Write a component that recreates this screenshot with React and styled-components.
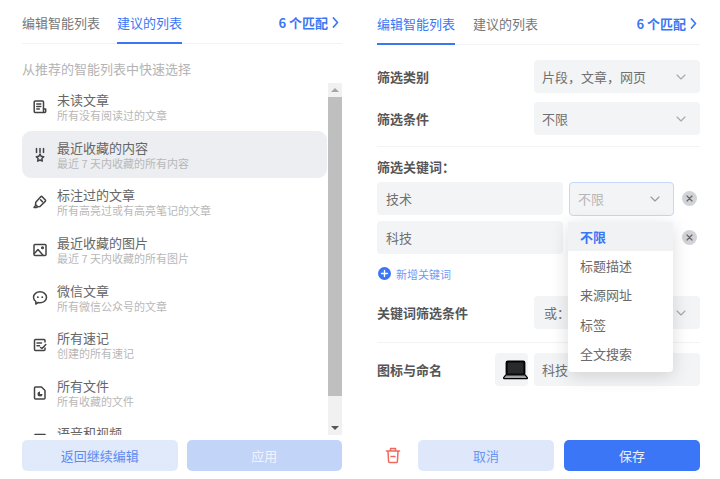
import React from 'react';
import styled, { createGlobalStyle } from 'styled-components';

const GlobalStyle = createGlobalStyle`
  html, body {
    margin: 0;
    padding: 0;
    background: #fff;
  }
  body {
    font-family: "Noto Sans CJK SC", "Noto Sans", sans-serif;
    font-size: 13px;
    color: #555;
  }
`;

const BLUE = '#3b76f6';

// Layout
const Page = styled.div`
  width: 720px;
  height: 479px;
  display: flex;
  overflow: hidden;
`;
const Panel = styled.div`
  width: ${(props) => props.$width}px;
  margin-left: ${(props) => props.$offset}px;
  height: 479px;
  box-sizing: border-box;
  padding-top: ${(props) => props.$top || 0}px;
  position: relative;
`;

// Tabs
const TabBar = styled.div`
  height: 44px;
  box-sizing: border-box;
  display: flex;
  align-items: stretch;
  gap: ${(props) => props.$gap}px;
  border-bottom: 1px solid #f2f3f5;
`;
const Tab = styled.div`
  height: 44px;
  box-sizing: border-box;
  line-height: 45px;
  font-size: 13px;
  color: ${(props) => (props.$active ? BLUE : '#777')};
  border-bottom: 2px solid ${(props) => (props.$active ? BLUE : 'transparent')};
  white-space: nowrap;
`;
const Match = styled.div`
  margin-left: auto;
  margin-right: 3px;
  display: flex;
  align-items: center;
  gap: 4px;
  height: 44px;
  font-size: 13px;
  font-weight: 700;
  color: ${BLUE};
`;

// Left panel
const Hint = styled.div`
  height: 39px;
  line-height: 50px;
  font-size: 13px;
  color: #b4b4b4;
`;
const ListWrap = styled.div`
  display: flex;
  height: 352px;
  overflow: hidden;
  gap: 1px;
`;
const List = styled.div`
  flex: 1;
  overflow: hidden;
`;
const Row = styled.div`
  height: 47.6px;
  box-sizing: border-box;
  display: flex;
  align-items: center;
  border-radius: 9px;
  background: ${(props) => (props.$active ? '#eceef2' : 'transparent')};
`;
const RowIcon = styled.div`
  width: 35px;
  flex: none;
  display: flex;
  justify-content: center;
  margin-top: 1px;
  color: #444;
`;
const RowText = styled.div`
  display: flex;
  flex-direction: column;
  min-height: 31px;
  margin-top: 2px;
`;
const RowTitle = styled.div`
  font-size: 13px;
  line-height: 16px;
  color: #666;
`;
const RowSub = styled.div`
  font-size: 11px;
  line-height: 15px;
  color: #b8b8b8;
`;
const Scrollbar = styled.div`
  width: 14px;
  flex: none;
  background: #f1f1f1;
  display: flex;
  flex-direction: column;
  align-items: center;
`;
const Arrow = styled.div`
  height: 14px;
  flex: none;
  display: flex;
  align-items: center;
  justify-content: center;
  margin-top: ${(props) => (props.$down ? 'auto' : 0)};
  &::after {
    content: '';
    border-left: 4px solid transparent;
    border-right: 4px solid transparent;
    ${(props) =>
      props.$down
        ? 'border-top: 4px solid #555;'
        : 'border-bottom: 4px solid #a6a6a6;'}
  }
`;
const Thumb = styled.div`
  width: 14px;
  height: 299px;
  background: #bfbfbf;
`;

// Footer buttons
const Footer = styled.div`
  position: absolute;
  left: 0;
  right: 0;
  top: 440px;
  display: flex;
  align-items: center;
  gap: ${(props) => props.$gap}px;
`;
const Button = styled.div`
  flex: ${(props) => (props.$fixed ? 'none' : 1)};
  width: ${(props) => (props.$fixed ? `${props.$fixed}px` : 'auto')};
  height: 31px;
  line-height: 31px;
  border-radius: 5px;
  text-align: center;
  font-size: 13px;
  background: ${(props) => props.$bg};
  color: ${(props) => props.$color};
`;
const Trash = styled.div`
  width: 31px;
  flex: none;
  display: flex;
  justify-content: flex-start;
  padding-left: 8px;
  box-sizing: border-box;
`;

// Right panel form
const FormRow = styled.div`
  display: flex;
  align-items: center;
  height: 33px;
  margin-top: ${(props) => props.$mt || 0}px;
`;
const Label = styled.div`
  font-size: 13px;
  font-weight: 700;
  color: #555;
  white-space: nowrap;
`;
const Field = styled.div`
  height: 33px;
  box-sizing: border-box;
  background: #f3f4f6;
  border-radius: 4px;
  display: flex;
  align-items: center;
  justify-content: space-between;
  padding: 0 13px 0 ${(props) => props.$pad || 8}px;
  font-size: 13px;
  color: #707070;
  flex: none;
  width: ${(props) => props.$width}px;
  margin-left: ${(props) => (props.$auto ? 'auto' : '0')};
`;
const Divider = styled.div`
  height: 1px;
  background: #f2f3f5;
  margin-top: ${(props) => props.$mt}px;
`;
const SectionTitle = styled.div`
  margin-top: 10px;
  height: 19px;
  line-height: 19px;
  font-size: 13px;
  font-weight: 700;
  color: #555;
`;
const KeywordRow = styled.div`
  display: flex;
  align-items: center;
  height: 33px;
  margin-top: ${(props) => props.$mt}px;
  position: relative;
`;
const FocusSelect = styled(Field)`
  width: 105px;
  height: 34px;
  margin-left: 6px;
  padding: 0 12px 0 8px;
  border: 1.5px solid #c6d6f7;
  color: #b5b5b5;
`;
const Remove = styled.div`
  width: 15px;
  height: 15px;
  border-radius: 50%;
  background: #d2d3d7;
  margin-left: ${(props) => props.$ml}px;
  display: flex;
  align-items: center;
  justify-content: center;
  flex: none;
`;
const Menu = styled.div`
  position: absolute;
  left: 191px;
  top: 1px;
  width: 105px;
  height: 150px;
  background: #fff;
  border-radius: 4px;
  box-shadow: 0 4px 18px rgba(0, 0, 0, 0.14);
  z-index: 2;
`;
const MenuItem = styled.div`
  height: 29.2px;
  line-height: 29.2px;
  padding-left: 12px;
  font-size: 13px;
  font-weight: ${(props) => (props.$active ? 700 : 400)};
  color: ${(props) => (props.$active ? BLUE : '#6a6a6a')};
  background: ${(props) => (props.$active ? '#f1f2f4' : 'transparent')};
`;
const AddKeyword = styled.div`
  display: flex;
  align-items: center;
  gap: 5px;
  height: 19px;
  margin-top: 10px;
  margin-left: 1px;
  font-size: 11px;
  color: #6f9bf7;
`;
const IconBox = styled.div`
  width: 33px;
  height: 33px;
  box-sizing: border-box;
  margin-left: auto;
  margin-right: 6px;
  padding-left: 8px;
  background: #f3f4f6;
  border-radius: 4px;
  display: flex;
  align-items: center;
  overflow: visible;
`;
const LaptopSvg = styled.svg`
  flex: none;
`;

// Icons
const Svg = ({ children, size = 16, ...rest }) => (
  <svg
    width={size}
    height={size}
    viewBox="0 0 16 16"
    fill="none"
    stroke="currentColor"
    strokeWidth="1.5"
    strokeLinecap="round"
    strokeLinejoin="round"
    {...rest}
  >
    {children}
  </svg>
);

const ArticleIcon = () => (
  <Svg>
    <path d="M12 13.500H3.200a1 1 0 0 1-1-1V3a1 1 0 0 1 1-1h7.300a1 1 0 0 1 1 1v9.500a1 1 0 0 0 1 1h.2a1 1 0 0 0 1-1V10h-2.500" />
    <path d="M4.800 5h4M4.800 7.500h4M4.800 10h2.500" />
  </Svg>
);
const MedalIcon = () => (
  <Svg>
    <path d="M4.500 1.500v4M8 1.500v4M11.500 1.500v4" />
    <path d="M8 7l1.200 2.300 2.500.4-1.800 1.800.4 2.600L8 13l-2.300 1.100.4-2.600-1.800-1.800 2.500-.4z" />
  </Svg>
);
const MarkerIcon = () => (
  <Svg>
    <path d="M10 2.600l3.400 3.400a.8.8 0 0 1 0 1.100L8 12.500l-2.200.3-2.300-2.300.3-2.200 5.100-5.700a.8.8 0 0 1 1.100 0z" />
    <path d="M8.500 5.800l1.800 1.800M3.600 11.400L2 13.500h2.600l.7-.8" />
  </Svg>
);
const ImageIcon = () => (
  <Svg>
    <rect x="2" y="2.500" width="12" height="11" rx="1" />
    <path d="M2.300 11.500L6 7.500l5 5.800" />
    <circle cx="10.500" cy="5.800" r=".8" />
  </Svg>
);
const ChatIcon = () => (
  <Svg>
    <path d="M8 1.800c3.500 0 6.500 2.400 6.500 5.500s-3 5.500-6.500 5.500c-.7 0-1.300-.1-1.900-.3L3.800 14v-2.500C2.400 10.500 1.500 9 1.500 7.300c0-3.100 3-5.500 6.500-5.500z" />
    <path d="M5.800 7.200h.1M10.200 7.200h.1" strokeWidth="1.800" />
  </Svg>
);
const NoteIcon = () => (
  <Svg>
    <path d="M13 5V3.500a1 1 0 0 0-1-1H3.500a1 1 0 0 0-1 1v9a1 1 0 0 0 1 1H12a1 1 0 0 0 1-1V11" />
    <path d="M5 6h4.500M5 8.800h2.500M8.500 10.500l1.500 1 3.800-4" />
  </Svg>
);
const FileIcon = () => (
  <Svg>
    <path d="M3.500 2h6l3.500 3.500V13a1 1 0 0 1-1 1H3.500a1 1 0 0 1-1-1V3a1 1 0 0 1 1-1z" />
    <path d="M8 6.500a2.500 2.500 0 1 0 2.500 2.500H8z" fill="currentColor" stroke="none" />
  </Svg>
);
const AudioIcon = () => (
  <Svg>
    <path d="M3 2.500h10" />
  </Svg>
);
const Chevron = ({ color = '#a8a8a8' }) => (
  <svg width="12" height="12" viewBox="0 0 12 12" fill="none" stroke={color} strokeWidth="1.100" strokeLinecap="round" strokeLinejoin="round">
    <path d="M2 4l4 4 4-4" />
  </svg>
);
const MatchArrow = () => (
  <svg width="7" height="11" viewBox="0 0 7 11" fill="none" stroke={BLUE} strokeWidth="1.700" strokeLinecap="round" strokeLinejoin="round">
    <path d="M1.500 1l4 4.500-4 4.500" />
  </svg>
);
const Cross = () => (
  <svg width="7" height="7" viewBox="0 0 7 7" stroke="#666" strokeWidth="1.200" strokeLinecap="round">
    <path d="M1 1l5 5M6 1L1 6" />
  </svg>
);
const PlusCircle = () => (
  <svg width="13" height="13" viewBox="0 0 13 13">
    <circle cx="6.500" cy="6.500" r="6.500" fill={BLUE} />
    <path d="M6.500 3.500v6M3.500 6.500h6" stroke="#fff" strokeWidth="1.400" strokeLinecap="round" />
  </svg>
);
const TrashIcon = () => (
  <svg width="16" height="17" viewBox="0 0 16 17" fill="none" stroke="#ee6a5f" strokeWidth="1.500" strokeLinecap="round" strokeLinejoin="round">
    <path d="M1.500 4h13M5.500 3.500V1.500h5v2M3 4.500l.6 10a1 1 0 0 0 1 1h6.800a1 1 0 0 0 1-1l.6-10M6 9.500h4" />
  </svg>
);
const Laptop = () => (
  <LaptopSvg width="25" height="20" viewBox="0 0 26 20">
    <rect x="3.500" y="1" width="19" height="14" rx="1.500" fill="#111" stroke="#000" strokeWidth="1.600" />
    <rect x="5" y="2.500" width="16" height="11" fill="#2a2a2c" />
    <path d="M3 15h20l2.300 3a.6.6 0 0 1-.5 1H1.200a.6.6 0 0 1-.5-1z" fill="#a2a2a4" stroke="#000" strokeWidth="1.300" />
  </LaptopSvg>
);

const rows = [
  { icon: <ArticleIcon />, title: '未读文章', sub: '所有没有阅读过的文章' },
  { icon: <MedalIcon />, title: '最近收藏的内容', sub: '最近 7 天内收藏的所有内容', active: true },
  { icon: <MarkerIcon />, title: '标注过的文章', sub: '所有高亮过或有高亮笔记的文章' },
  { icon: <ImageIcon />, title: '最近收藏的图片', sub: '最近 7 天内收藏的所有图片' },
  { icon: <ChatIcon />, title: '微信文章', sub: '所有微信公众号的文章' },
  { icon: <NoteIcon />, title: '所有速记', sub: '创建的所有速记' },
  { icon: <FileIcon />, title: '所有文件', sub: '所有收藏的文件' },
  { icon: <AudioIcon />, title: '语音和视频' },
];

const menuItems = ['不限', '标题描述', '来源网址', '标签', '全文搜索'];

function App() {
  return (
    <Page>
      <GlobalStyle />
      <Panel $width={320} $offset={22}>
        <TabBar $gap={17}>
          <Tab>编辑智能列表</Tab>
          <Tab $active>建议的列表</Tab>
          <Match>
            6 个匹配 <MatchArrow />
          </Match>
        </TabBar>
        <Hint>从推荐的智能列表中快速选择</Hint>
        <ListWrap>
          <List>
            {rows.map((row) => (
              <Row key={row.title} $active={row.active}>
                <RowIcon>{row.icon}</RowIcon>
                <RowText>
                  <RowTitle>{row.title}</RowTitle>
                  {row.sub && <RowSub>{row.sub}</RowSub>}
                </RowText>
              </Row>
            ))}
          </List>
          <Scrollbar>
            <Arrow />
            <Thumb />
            <Arrow $down />
          </Scrollbar>
        </ListWrap>
        <Footer $gap={9}>
          <Button $bg="#e1eafb" $color="#5d8bf2">返回继续编辑</Button>
          <Button $bg="#c3d4f9" $color="#eef3fe">应用</Button>
        </Footer>
      </Panel>

      <Panel $width={323} $offset={35} $top={1}>
        <TabBar $gap={18}>
          <Tab $active>编辑智能列表</Tab>
          <Tab>建议的列表</Tab>
          <Match>
            6 个匹配 <MatchArrow />
          </Match>
        </TabBar>
        <FormRow $mt={15}>
          <Label>筛选类别</Label>
          <Field $width={166} $auto>
            片段，文章，网页 <Chevron />
          </Field>
        </FormRow>
        <FormRow $mt={9}>
          <Label>筛选条件</Label>
          <Field $width={166} $auto>
            不限 <Chevron />
          </Field>
        </FormRow>
        <Divider $mt={11} />
        <SectionTitle>筛选关键词：</SectionTitle>
        <KeywordRow $mt={6}>
          <Field $width={186} $pad={9}>技术</Field>
          <FocusSelect>
            不限 <Chevron color="#999" />
          </FocusSelect>
          <Remove $ml={8}><Cross /></Remove>
        </KeywordRow>
        <KeywordRow $mt={6}>
          <Field $width={186} $pad={9}>科技</Field>
          <Menu>
            {menuItems.map((item, i) => (
              <MenuItem key={item} $active={i === 0}>{item}</MenuItem>
            ))}
          </Menu>
          <Remove $ml={119}><Cross /></Remove>
        </KeywordRow>
        <AddKeyword>
          <PlusCircle />
          新增关键词
        </AddKeyword>
        <FormRow $mt={13}>
          <Label>关键词筛选条件</Label>
          <Field $width={166} $auto $pad={10}>
            或：<Chevron />
          </Field>
        </FormRow>
        <Divider $mt={13} />
        <FormRow $mt={10}>
          <Label>图标与命名</Label>
          <IconBox><Laptop /></IconBox>
          <Field $width={166}>科技</Field>
        </FormRow>
        <Footer $gap={10}>
          <Trash><TrashIcon /></Trash>
          <Button $bg="#dfe8fb" $color="#6a95f2">取消</Button>
          <Button $fixed={136} $bg="#3b76f6" $color="#e8effe">保存</Button>
        </Footer>
      </Panel>
    </Page>
  );
}

export default App;
